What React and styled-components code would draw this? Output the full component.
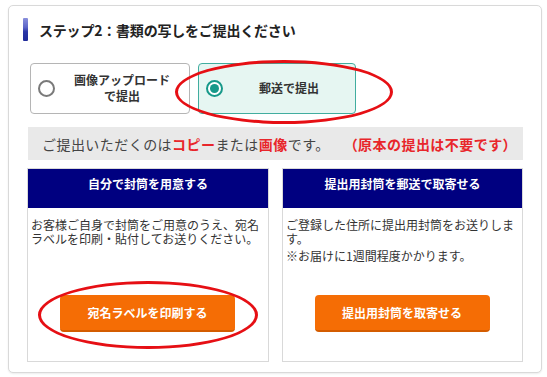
import React from "react";
import styled, { createGlobalStyle } from "styled-components";

const Global = createGlobalStyle`
  html, body { margin: 0; padding: 0; background: #fff; }
  body { font-family: "Noto Sans CJK JP", "Noto Sans", sans-serif; color: #333; }
  * { box-sizing: border-box; }
`;

const Page = styled.div`
  padding: 5px 5px 4px 8px;
`;

const Card = styled.section`
  position: relative;
  width: 534px;
  height: 368px;
  border: 1px solid #d9d9d9;
  border-radius: 5px;
  box-shadow: 0 1px 2px rgba(0, 0, 0, 0.08);
  background: #fff;
  padding: 12px 18px 10px 18px;
  display: flex;
  flex-direction: column;
`;

const Title = styled.h2`
  margin: 0 0 0 -4px;
  height: 23px;
  display: flex;
  align-items: center;
  gap: 11px;
  font-size: 14px;
  font-weight: 700;
  color: #222;
  letter-spacing: -0.2px;
`;

const Accent = styled.span`
  width: 5px;
  height: 23px;
  border-radius: 1px;
  background: linear-gradient(#8a90dc 0%, #5d66c8 40%, #2a36a6 60%, #1f2b9a 100%);
`;

const Options = styled.div`
  margin: 22px 0 0 3px;
  display: flex;
  gap: 8px;
`;

const Option = styled.label`
  width: ${(p) => (p.$wide ? 160 : 158)}px;
  height: 51px;
  border: 1px solid ${(p) => (p.$checked ? "#41ad9f" : "#b5b5b5")};
  background: ${(p) => (p.$checked ? "#e6f6f2" : "#fff")};
  border-radius: 4px;
  display: flex;
  align-items: center;
  padding-left: 7px;
`;

const Radio = styled.span`
  flex: none;
  width: 17px;
  height: 17px;
  border-radius: 50%;
  border: 2px solid ${(p) => (p.$checked ? "#17998a" : "#7a7a7a")};
  background: #fff;
  display: flex;
  align-items: center;
  justify-content: center;
  &::after {
    content: "";
    display: ${(p) => (p.$checked ? "block" : "none")};
    width: 9px;
    height: 9px;
    border-radius: 50%;
    background: #17998a;
  }
`;

const OptionText = styled.span`
  flex: 1;
  text-align: center;
  font-size: 12px;
  font-weight: 700;
  line-height: 15.5px;
  color: #333;
  margin-top: -2px;
`;

const Notice = styled.p`
  margin: 13px 0 0 1px;
  height: 33px;
  background: #e9e9e9;
  display: flex;
  align-items: center;
  padding: 1px 0 0 14px;
  font-size: 14px;
  letter-spacing: 0.45px;
  color: #444;
  white-space: nowrap;
`;

const Red = styled.span`
  color: #e8262b;
  font-weight: ${(p) => (p.$bold ? 700 : 500)};
  margin-left: ${(p) => p.$gap || 0}px;
`;

const Panels = styled.div`
  margin-top: 8px;
  flex: 1;
  display: grid;
  grid-template-columns: 242px 241px;
  gap: 13px;
`;

const Panel = styled.div`
  border: 1px solid #d9d9d9;
  display: flex;
  flex-direction: column;
`;

const PanelHead = styled.h3`
  margin: 0;
  height: 39px;
  background: #000080;
  color: #fff;
  font-size: 12px;
  font-weight: 700;
  text-align: center;
  padding-top: 7px;
  line-height: 16px;
`;

const PanelBody = styled.div`
  flex: 1;
  display: flex;
  flex-direction: column;
  padding: 10px 4px 0 3px;
  font-size: 12px;
  line-height: 14px;
  color: #333;
`;

const Note = styled.div`
  margin-top: 3px;
`;

const Button = styled.button`
  margin: auto auto 29px;
  width: 175px;
  height: 37px;
  border: none;
  border-bottom: 2px solid #d45c00;
  border-radius: 4px;
  background: #f56d05;
  color: #fff;
  font-family: inherit;
  font-size: 12px;
  font-weight: 700;
  padding: 0;
  cursor: pointer;
`;

const Circle = styled.span`
  position: absolute;
  left: ${(p) => p.$x}px;
  top: ${(p) => p.$y}px;
  width: ${(p) => p.$w}px;
  height: ${(p) => p.$h}px;
  border: 3px solid #e60f14;
  border-radius: 50%;
  pointer-events: none;
`;

export default function App() {
  return (
    <>
      <Global />
      <Page>
        <Card>
          <Title>
            <Accent />
            ステップ2：書類の写しをご提出ください
          </Title>
          <Options>
            <Option $wide>
              <Radio />
              <OptionText>
                画像アップロード
                <br />
                で提出
              </OptionText>
            </Option>
            <Option $checked>
              <Radio $checked />
              <OptionText>郵送で提出</OptionText>
            </Option>
          </Options>
          <Notice>
            ご提出いただくのは<Red $bold>コピー</Red>または<Red $bold>画像</Red>です。
            <Red $bold $gap={14}>（原本の提出は不要です）</Red>
          </Notice>
          <Panels>
            <Panel>
              <PanelHead>自分で封筒を用意する</PanelHead>
              <PanelBody>
                <div>お客様ご自身で封筒をご用意のうえ、宛名ラベルを印刷・貼付してお送りください。</div>
                <Button>宛名ラベルを印刷する</Button>
              </PanelBody>
            </Panel>
            <Panel>
              <PanelHead>提出用封筒を郵送で取寄せる</PanelHead>
              <PanelBody>
                <div>ご登録した住所に提出用封筒をお送りします。</div>
                <Note>※お届けに1週間程度かかります。</Note>
                <Button>提出用封筒を取寄せる</Button>
              </PanelBody>
            </Panel>
          </Panels>
          <Circle $x={166} $y={54} $w={218} $h={64} />
          <Circle $x={29} $y={275} $w={220} $h={68} />
        </Card>
      </Page>
    </>
  );
}
